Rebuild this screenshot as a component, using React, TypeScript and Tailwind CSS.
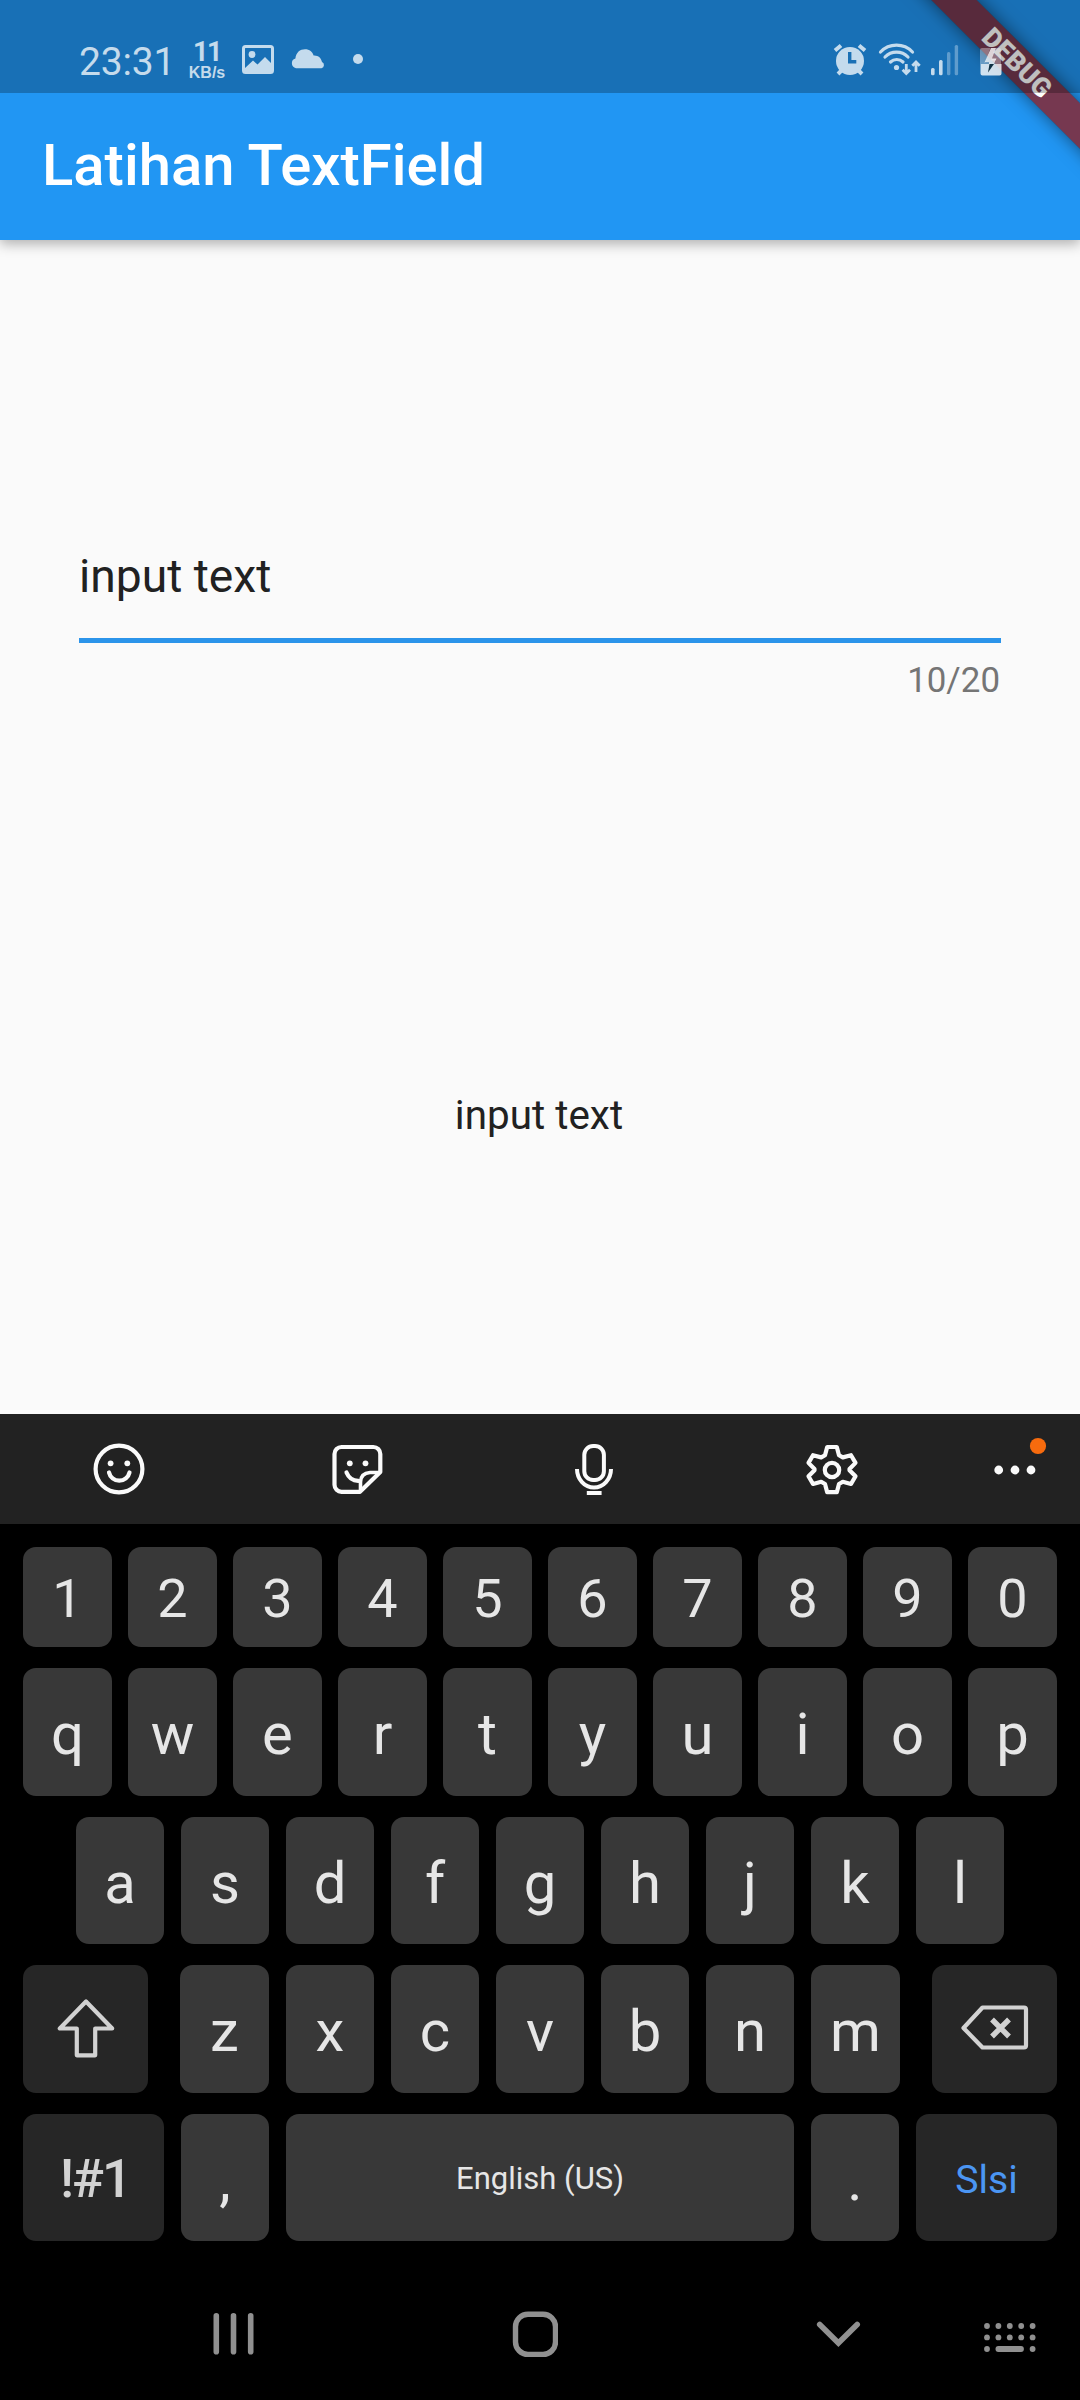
import React from "react";

const TONE = "#c4dbed";

function StatusBar() {
  return (
    <div className="relative z-20 flex h-[93px] bg-black/25 text-white/75">
      <div className="ml-[79px] w-[110px] pt-[39px] text-[39px] leading-[46px] tracking-[-0.200px]">23:31</div>
      <div className="flex w-[36px] flex-col items-center pt-[40px] font-bold">
        <div className="text-[27px] leading-[25px] tracking-[-1.5px]">11</div>
        <div className="font-['Liberation_Sans',sans-serif] text-[16px] leading-[16px]">KB/s</div>
      </div>
      <svg className="ml-[17px] mt-[45px]" width="32" height="29" viewBox="0 0 32 29">
        <rect x="1.5" y="1.5" width="29" height="26" rx="2" fill="none" stroke={TONE} strokeWidth="3" />
        <circle cx="10" cy="9.5" r="3.4" fill={TONE} />
        <path d="M2 24l9-8.500 4.500 4 7.500-7.500 7 7V28H2z" fill={TONE} />
      </svg>
      <svg className="ml-[17px] mt-[49px]" width="34" height="20" viewBox="0 0 34 20">
        <path d="M5 19.200a5 5 0 0 1-.6-9.700C5 3.500 9 .3 14 .3c4.600 0 7.600 2.700 8.600 6.200 4.500-.4 7.600 2.500 8.400 6.500A3.300 3.300 0 0 1 30.500 19.200z" fill={TONE} />
      </svg>
      <svg className="ml-[28px] mt-[54px]" width="10" height="10">
        <circle cx="5" cy="5" r="5" fill={TONE} />
      </svg>
      <svg className="ml-[470px] mt-[42px]" width="36" height="36" viewBox="0 0 36 36">
        <circle cx="17" cy="19" r="14" fill={TONE} />
        <path d="M2 8.500l6-5M32 8.500l-6-5M5 32l5-5M29 32l-5-5" stroke={TONE} strokeWidth="4" />
        <path d="M16.700 10v9.700h6.600" fill="none" stroke="#1a70b5" strokeWidth="3.400" />
      </svg>
      <svg className="ml-[9px] mt-[42px]" width="44" height="36" viewBox="0 0 44 36">
        <g fill="none" stroke={TONE} strokeWidth="3.200" strokeLinecap="round">
          <path d="M2.500 10a22 22 0 0 1 32 0" />
          <path d="M7 15a16 16 0 0 1 23 0" />
          <path d="M12.500 20a9 9 0 0 1 12.500 0" />
        </g>
        <circle cx="18.500" cy="25.500" r="2.600" fill={TONE} />
        <path d="M28.300 22v9M24.600 27.800l3.700 3.700 3.700-3.700M38 30v-9M34.300 23.800l3.700-3.700 3.700 3.700" fill="none" stroke={TONE} strokeWidth="2.800" />
      </svg>
      <svg className="ml-[9px] mt-[44px]" width="28" height="32" viewBox="0 0 28 32">
        <rect x="0" y="24" width="3.600" height="7.300" rx="1.500" fill={TONE} />
        <rect x="8" y="16" width="3.600" height="15.300" rx="1.500" fill={TONE} />
        <rect x="16" y="8" width="3.400" height="23.300" rx="1.500" fill="#5f9ccd" />
        <rect x="23.700" y="1" width="3.400" height="30.300" rx="1.500" fill="#5f9ccd" />
      </svg>
      <svg className="ml-[21px] mt-[47px]" width="22" height="30" viewBox="0 0 22 30">
        <path d="M2 1h8.500L5 16h5.500l-2.700 9L16 13.500h-5L16 1h3q2 0 2 2v14H0V3q0-2 2-2z" fill="white" fillOpacity=".35" />
        <path d="M11 1h5l-4 10.500h4.500L14 17h7.500v9.500q0 2-2 2h-17q-2 0-2-2V17H9v-1.500H4.500z" fill="white" fillOpacity=".8" />
        <path d="M9.500 17H14l-6 8.500z" fill="#0d2f42" />
      </svg>
    </div>
  );
}

function DebugRibbon() {
  return (
    <div className="pointer-events-none absolute right-0 top-0 z-10 h-[240px] w-[240px] overflow-hidden">
      <div className="absolute left-[17px] top-[47px] h-[32px] w-[320px] rotate-45 bg-black/35 shadow-[0_0_17px_rgba(0,0,0,0.5)]">
        <div className="flex h-full items-center justify-center bg-[#b71c1c]/60">
          <span className="text-[26.800px] font-black leading-none text-white">DEBUG</span>
        </div>
      </div>
    </div>
  );
}

function Key({ label, className = "" }: { label: string; className?: string }) {
  return (
    <div className={`flex shrink-0 items-center justify-center rounded-[13px] bg-[#383838] text-[#e6e6e6] ${className}`}>
      {label}
    </div>
  );
}

function Toolbar() {
  return (
    <div className="flex h-[110px] items-center bg-[#222222] pl-[89px]">
      <svg width="60" height="60" viewBox="0 0 60 60" fill="none" stroke="#fafafa" strokeWidth="4.200" strokeLinecap="round">
        <circle cx="30" cy="30" r="23.400" />
        <path d="M20 33.500a10.500 10.500 0 0 0 20.500 0" />
        <circle cx="21.600" cy="24.300" r="2.900" fill="#fafafa" stroke="none" />
        <circle cx="38.300" cy="24.300" r="2.900" fill="#fafafa" stroke="none" />
      </svg>
      <svg className="ml-[178px]" width="60" height="60" viewBox="0 0 60 60" fill="none" stroke="#fafafa" strokeWidth="4.200" strokeLinecap="round" strokeLinejoin="round">
        <path d="M33 52.800H14.500a7 7 0 0 1-7-7V15a7 7 0 0 1 7-7h31.800a7 7 0 0 1 7 7v18z" />
        <path d="M33.500 51.500V43q.5-9 9.500-9.500h9.500" strokeWidth="3.600" />
        <path d="M19.500 33.500q3.500 8.500 12 8.300" />
        <circle cx="22.800" cy="24.300" r="2.900" fill="#fafafa" stroke="none" />
        <circle cx="38.500" cy="24.300" r="2.900" fill="#fafafa" stroke="none" />
      </svg>
      <svg className="ml-[177px]" width="60" height="60" viewBox="0 0 60 60" fill="none" stroke="#fafafa" strokeWidth="4">
        <rect x="20.300" y="7" width="19.600" height="34" rx="8.800" />
        <path d="M13 30a17 18.500 0 0 0 34 0" />
        <path d="M22.800 54h14.800" />
      </svg>
      <svg className="ml-[178px]" width="60" height="60" viewBox="0 0 60 60" fill="none" stroke="#fafafa" strokeWidth="4.200" strokeLinejoin="round">
        <path d="M25.200 8h9.600l2.200 8.200 3.800 2.200 8.200-2.200 4.500 7.700-6 6.100v1.200l6 6.100-4.500 7.700-8.200-2.200-3.800 2.200-2.200 8.200h-9.600L23 45l-3.800-2.200L11 45l-4.500-7.700 6-6.100V30l-6-6.100L11 16.200l8.200 2.200 3.800-2.200z" />
        <circle cx="30" cy="31" r="7.200" />
      </svg>
      <svg className="ml-[128px] overflow-visible" width="70" height="60" viewBox="0 0 70 60">
        <circle cx="8.700" cy="31" r="4.400" fill="#fafafa" />
        <circle cx="25" cy="31" r="4.400" fill="#fafafa" />
        <circle cx="41" cy="31" r="4.400" fill="#fafafa" />
        <circle cx="48" cy="7" r="8.100" fill="#f76b0e" />
      </svg>
    </div>
  );
}

function Keyboard() {
  return (
    <div className="flex h-[767px] flex-col gap-[21px] bg-black px-[23px] pt-[23px]">
      <div className="flex h-[100px] gap-[16px]">
        {"1234567890".split("").map((k) => (
          <Key key={k} label={k} className="w-[89px] pt-[3px] text-[54px]" />
        ))}
      </div>
      <div className="flex h-[128px] gap-[16px]">
        {"qwertyuiop".split("").map((k) => (
          <Key key={k} label={k} className="w-[89px] pt-[4px] text-[58px]" />
        ))}
      </div>
      <div className="flex h-[127px] gap-[17px] pl-[53px]">
        {"asdfghjkl".split("").map((k) => (
          <Key key={k} label={k} className="w-[88px] pt-[5px] text-[58px]" />
        ))}
      </div>
      <div className="flex h-[128px] justify-between">
        <div className="flex w-[125px] items-center justify-center rounded-[13px] bg-[#262626]">
          <svg width="60" height="62" viewBox="0 0 60 62" fill="none" stroke="#d2d2d2" strokeWidth="4.200" strokeLinejoin="round">
            <path d="M30 3.500L3.800 30.500h17v26.800h18.400V30.500h17z" />
          </svg>
        </div>
        <div className="flex gap-[17px]">
          {"zxcvbnm".split("").map((k) => (
            <Key key={k} label={k} className="w-[88px] pt-[4px] text-[58px] first:w-[89px] last:w-[89px]" />
          ))}
        </div>
        <div className="flex w-[125px] items-center justify-center rounded-[13px] bg-[#262626]">
          <svg className="mb-[3px]" width="70" height="48" viewBox="0 0 70 48" fill="none" stroke="#d2d2d2" strokeWidth="4.200" strokeLinejoin="round">
            <path d="M22.500 3.500H64q2 0 2 2v36q0 2-2 2H22.500L3.500 24z" />
            <path d="M32 15.500l17 17M49 15.500l-17 17" strokeWidth="5.400" />
          </svg>
        </div>
      </div>
      <div className="flex h-[127px] gap-[17px]">
        <div className="flex w-[141px] items-center justify-center rounded-[13px] bg-[#262626] pl-[3px] pt-[4px] text-[53px] font-medium tracking-[-2px] text-[#d2d2d2]">!#1</div>
        <Key label="," className="w-[88px] pt-[5px] text-[58px]" />
        <Key label="English (US)" className="w-[508px] pt-[4px] text-[31px]" />
        <Key label="." className="w-[88px] pt-[5px] text-[58px]" />
        <div className="flex w-[141px] items-center justify-center rounded-[13px] bg-[#262626] pt-[6px] text-[39.200px] text-[#4b96f3]">Slsi</div>
      </div>
    </div>
  );
}

function NavBar() {
  const xs = [4, 15.400, 26.800, 38.200, 49.600];
  return (
    <div className="flex h-[109px] items-start bg-black pl-[213px] pt-[18px]">
      <svg width="42" height="50" viewBox="0 0 42 50" stroke="#909090" strokeWidth="5.600" strokeLinecap="round">
        <path d="M3.300 6.800v36M20.500 6.800v36M37.700 6.800v36" />
      </svg>
      <svg className="ml-[257px]" width="46" height="50" viewBox="0 0 46 50" fill="none" stroke="#909090" strokeWidth="5.400">
        <rect x="3.500" y="5.200" width="40" height="40.200" rx="12.500" />
      </svg>
      <svg className="ml-[257px]" width="46" height="50" viewBox="0 0 46 50" fill="none" stroke="#909090" strokeWidth="5.600" strokeLinecap="round">
        <path d="M4.700 15.500l18.700 18.500L42.200 15.500" />
      </svg>
      <svg className="ml-[122px]" width="54" height="50" viewBox="0 0 54 50" fill="#909090">
        {xs.map((x) => (
          <g key={x}>
            <circle cx={x} cy="17" r="2.900" />
            <circle cx={x} cy="28.400" r="2.900" />
          </g>
        ))}
        <circle cx="4" cy="40" r="2.900" />
        <circle cx="49.600" cy="40" r="2.900" />
        <rect x="12.500" y="37.100" width="28.400" height="5.800" rx="2.900" />
      </svg>
    </div>
  );
}

export default function App() {
  return (
    <div className="flex h-[2400px] w-[1080px] flex-col bg-[#fafafa] font-[Roboto,sans-serif]">
      <header className="relative z-10 h-[240px] bg-[#2196f3] shadow-[0_4px_12px_rgba(0,0,0,0.3)]">
        <DebugRibbon />
        <StatusBar />
        <h1 className="pl-[42px] pt-[38px] text-[58px] font-medium leading-[68px] text-white">Latihan TextField</h1>
      </header>
      <main className="flex h-[1174px] flex-col px-[79px] pt-[306px]">
        <div className="h-[97px] border-b-[5px] border-[#2b94ea] text-[46.200px] leading-[60px] text-[#212121]">input text</div>
        <div className="pr-[1px] pt-[16px] text-right text-[34.900px] leading-[44px] text-[#757575]">10/20</div>
        <div className="mt-[388px] pr-[2px] text-center text-[40.425px] leading-[50px] text-[#212121]">input text</div>
      </main>
      <Toolbar />
      <Keyboard />
      <NavBar />
    </div>
  );
}
